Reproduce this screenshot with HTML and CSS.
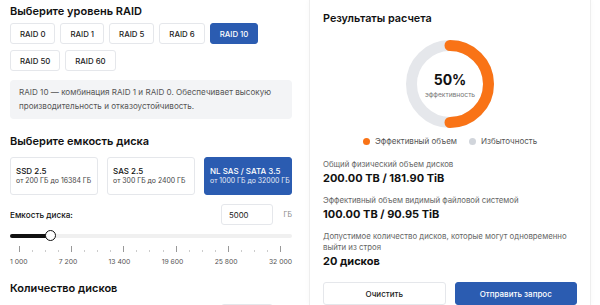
FILE: index.html
```html
<!DOCTYPE html>
<html lang="ru">
<head>
    <meta charset="UTF-8">
    <title>Калькулятор RAID</title>
    <link rel="stylesheet" href="styles.css">
</head>
<body>
    <div class="calc">
        <div class="left">
            <h2 class="section-title first">Выберите уровень RAID</h2>
            <div class="raid-list">
                <button class="raid-btn">RAID 0</button>
                <button class="raid-btn">RAID 1</button>
                <button class="raid-btn">RAID 5</button>
                <button class="raid-btn">RAID 6</button>
                <button class="raid-btn active">RAID 10</button>
                <button class="raid-btn">RAID 50</button>
                <button class="raid-btn">RAID 60</button>
            </div>
            <div class="raid-info">
                RAID 10 — комбинация RAID 1 и RAID 0. Обеспечивает высокую производительность и отказоустойчивость.
            </div>

            <h2 class="section-title">Выберите емкость диска</h2>
            <div class="disk-types">
                <div class="disk-card">
                    <div class="disk-name">SSD 2.5</div>
                    <div class="disk-range">от 200 ГБ до 16384 ГБ</div>
                </div>
                <div class="disk-card">
                    <div class="disk-name">SAS 2.5</div>
                    <div class="disk-range">от 300 ГБ до 2400 ГБ</div>
                </div>
                <div class="disk-card active">
                    <div class="disk-name">NL SAS / SATA 3.5</div>
                    <div class="disk-range">от 1000 ГБ до 32000 ГБ</div>
                </div>
            </div>

            <div class="field-row">
                <span class="field-label">Емкость диска:</span>
                <input class="field-input" type="text" value="5000">
                <span class="field-unit">ГБ</span>
            </div>
            <div class="slider">
                <div class="slider-fill"></div>
                <div class="slider-thumb"></div>
            </div>
            <div class="ticks">
                <span class="tick big"></span><span class="tick"></span><span class="tick"></span><span class="tick"></span>
                <span class="tick big"></span><span class="tick"></span><span class="tick"></span><span class="tick"></span>
                <span class="tick big"></span><span class="tick"></span><span class="tick"></span><span class="tick"></span>
                <span class="tick big"></span><span class="tick"></span><span class="tick"></span><span class="tick"></span>
                <span class="tick big"></span><span class="tick"></span><span class="tick"></span><span class="tick"></span>
                <span class="tick big"></span>
            </div>
            <div class="tick-labels">
                <span>1 000</span>
                <span>7 200</span>
                <span>13 400</span>
                <span>19 600</span>
                <span>25 800</span>
                <span>32 000</span>
            </div>

            <h2 class="section-title">Количество дисков</h2>
            <div class="field-row next">
                <span class="field-label"></span>
                <input class="field-input" type="text" value="">
                <span class="field-unit"></span>
            </div>
        </div>

        <div class="right">
            <div class="result-card">
                <h2 class="result-title">Результаты расчета</h2>
                <div class="donut">
                    <svg width="90" height="90" viewBox="0 0 90 90">
                        <circle cx="45" cy="45" r="38.5" fill="none" stroke="#e5e7eb" stroke-width="11"/>
                        <path d="M45 6.5 A38.5 38.5 0 0 1 45 83.5" fill="none" stroke="#f97316" stroke-width="11" stroke-linecap="round"/>
                    </svg>
                    <div class="donut-text">
                        <div class="donut-value">50%</div>
                        <div class="donut-label">эффективность</div>
                    </div>
                </div>
                <div class="legend">
                    <span class="legend-item"><span class="dot orange"></span>Эффективный объем</span>
                    <span class="legend-item"><span class="dot gray"></span>Избыточность</span>
                </div>

                <div class="stat">
                    <div class="stat-label">Общий физический объем дисков</div>
                    <div class="stat-value">200.00 TB / 181.90 TiB</div>
                </div>
                <div class="stat">
                    <div class="stat-label">Эффективный объем видимый файловой системой</div>
                    <div class="stat-value">100.00 TB / 90.95 TiB</div>
                </div>
                <div class="stat">
                    <div class="stat-label">Допустимое количество дисков, которые могут одновременно<br>выйти из строя</div>
                    <div class="stat-value">20 дисков</div>
                </div>

                <div class="actions">
                    <button class="btn btn-light">Очистить</button>
                    <button class="btn btn-primary">Отправить запрос</button>
                </div>
            </div>
        </div>
    </div>
</body>
</html>
```

FILE: styles.css
```css
body {
    margin: 0;
    font-family: Inter, "Noto Sans", sans-serif;
    color: #111;
    background-color: #fafafa;
    overflow: hidden;
}
.calc {
    display: flex;
    gap: 17px;
    padding: 0 9px 0 10px;
    background-color: #fff;
    height: 305px;
}
.left {
    width: 282px;
    flex-shrink: 0;
}
.section-title {
    font-size: 11px;
    font-weight: 600;
    line-height: 14px;
    margin: 15px 0 9px;
}
.section-title.first {
    margin: 0;
    padding-top: 4px;
}
.raid-list {
    display: flex;
    flex-wrap: wrap;
    gap: 6px 5px;
    width: 260px;
    margin-top: 5px;
}
.raid-btn {
    height: 21px;
    padding: 0 9px;
    font-family: inherit;
    font-size: 7.8px;
    font-weight: 500;
    color: #222;
    background-color: #fff;
    border: 1px solid #e5e7eb;
    border-radius: 3px;
}
.raid-btn.active {
    background-color: #2b5cb1;
    border-color: #2b5cb1;
    color: #fff;
}
.raid-info {
    margin-top: 9px;
    height: 39px;
    box-sizing: border-box;
    background-color: #f3f4f6;
    border-radius: 4px;
    padding: 5px 9px;
    font-size: 8.1px;
    line-height: 14px;
    color: #555;
}
.disk-types {
    display: flex;
    gap: 9px;
}
.disk-card {
    flex: 1;
    height: 38px;
    box-sizing: border-box;
    border: 1px solid #e5e7eb;
    border-radius: 3px;
    padding: 0 0 0 5px;
    display: flex;
    flex-direction: column;
    justify-content: center;
}
.disk-card.active {
    background-color: #2b5cb1;
    border-color: #2b5cb1;
    color: #fff;
}
.disk-name {
    font-size: 8px;
    font-weight: 500;
    line-height: 10px;
}
.disk-range {
    font-size: 6.9px;
    line-height: 10px;
    color: #444;
}
.disk-card.active .disk-range {
    color: #e6ecf7;
}
.field-row {
    display: flex;
    align-items: center;
    margin-top: 9px;
}
.field-label {
    font-size: 8.2px;
    font-weight: 500;
    flex: 1;
}
.field-input {
    width: 52px;
    height: 21px;
    box-sizing: border-box;
    border: 1px solid #e5e7eb;
    border-radius: 3px;
    padding: 0 7px;
    font-family: inherit;
    font-size: 7.8px;
    color: #222;
    outline: none;
}
.field-unit {
    width: 19px;
    text-align: right;
    font-size: 7px;
    color: #888;
}
.slider {
    position: relative;
    height: 4px;
    margin-top: 9px;
    background-color: #f0f0f0;
    border-radius: 2px;
}
.slider-fill {
    width: 40px;
    height: 4px;
    background-color: #111;
    border-radius: 2px;
}
.slider-thumb {
    position: absolute;
    left: 35px;
    top: -4px;
    width: 11px;
    height: 11px;
    box-sizing: border-box;
    background-color: #fff;
    border: 1.5px solid #111;
    border-radius: 50%;
}
.ticks {
    display: flex;
    justify-content: space-between;
    align-items: flex-end;
    height: 6px;
    margin-top: 8px;
    padding: 0 11px 0 9px;
}
.tick {
    width: 1px;
    height: 2px;
    background-color: #ccc;
}
.tick.big {
    height: 6px;
    background-color: #999;
}
.tick-labels {
    display: flex;
    justify-content: space-between;
    margin-top: 5px;
    font-size: 6.8px;
    line-height: 9px;
    color: #555;
}
.field-row.next {
    margin-top: 1px;
}
.right {
    width: 282px;
    flex-shrink: 0;
}
.result-card {
    height: 305px;
    box-sizing: border-box;
    border-left: 1px solid #eee;
    border-right: 1px solid #eee;
    padding: 12px 13px 0;
    box-shadow: 0 0 6px rgba(0, 0, 0, 0.03);
}
.result-title {
    font-size: 10.8px;
    font-weight: 600;
    margin: 0;
    line-height: 14px;
}
.donut {
    position: relative;
    width: 90px;
    height: 90px;
    margin: 13px auto 0;
}
.donut svg {
    display: block;
}
.donut-text {
    position: absolute;
    left: 0;
    right: 0;
    top: 32px;
    text-align: center;
}
.donut-value {
    font-size: 14px;
    font-weight: 700;
    line-height: 17px;
}
.donut-label {
    font-size: 6.7px;
    line-height: 10px;
    margin-top: 2px;
    color: #777;
}
.legend {
    display: flex;
    justify-content: center;
    gap: 12px;
    margin-top: 7px;
    font-size: 8px;
    line-height: 10px;
    color: #555;
}
.legend-item {
    display: flex;
    align-items: center;
    gap: 5px;
}
.dot {
    width: 7px;
    height: 7px;
    border-radius: 50%;
}
.dot.orange {
    background-color: #f97316;
}
.dot.gray {
    background-color: #d1d5db;
}
.stat {
    margin-top: 13px;
}
.stat + .stat {
    margin-top: 9px;
}
.stat-label {
    font-size: 7.8px;
    line-height: 11px;
    color: #666;
    white-space: nowrap;
}
.stat-value {
    font-size: 11px;
    font-weight: 700;
    line-height: 15px;
    margin-top: 1px;
}
.actions {
    display: flex;
    gap: 9px;
    margin-top: 13px;
}
.btn {
    flex: 1;
    height: 23px;
    font-family: inherit;
    font-size: 8px;
    font-weight: 500;
    border-radius: 3px;
}
.btn-light {
    background-color: #fff;
    border: 1px solid #e5e7eb;
    color: #222;
}
.btn-primary {
    background-color: #2b5cb1;
    border: 1px solid #2b5cb1;
    color: #fff;
}
```
